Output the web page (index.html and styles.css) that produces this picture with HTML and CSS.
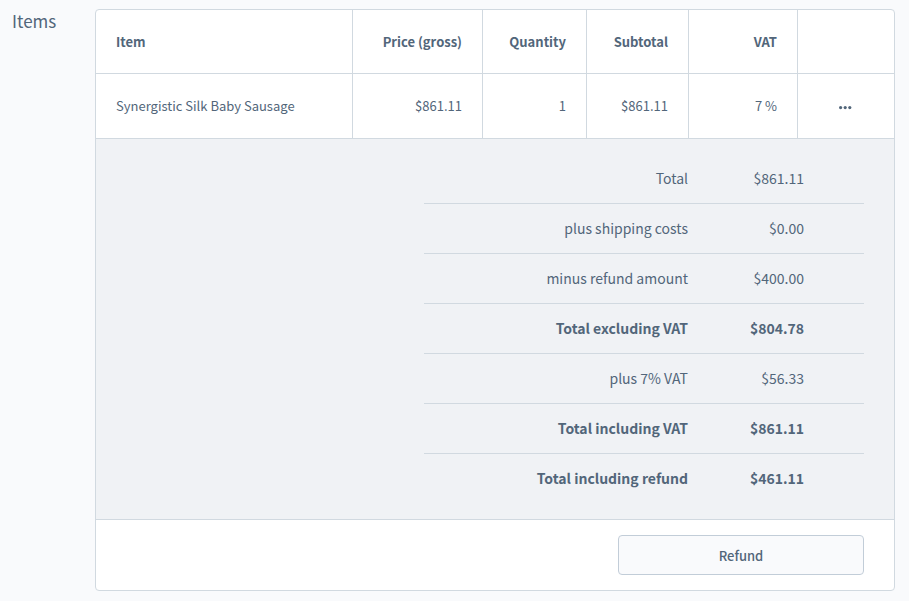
FILE: index.html
```
<!DOCTYPE html>
<html lang="en">
<head>
    <meta charset="UTF-8">
    <meta name="viewport" content="width=device-width, initial-scale=1.0">
    <title>Order - Items</title>
    <link rel="stylesheet" href="styles.css">
</head>
<body>
    <section class="order-section">
        <h2 class="section-title">Items</h2>

        <div class="card">
            <table class="items-table">
                <colgroup>
                    <col>
                    <col class="col-price">
                    <col class="col-quantity">
                    <col class="col-subtotal">
                    <col class="col-vat">
                    <col class="col-actions">
                </colgroup>
                <thead>
                    <tr>
                        <th scope="col">Item</th>
                        <th scope="col" class="number">Price (gross)</th>
                        <th scope="col" class="number">Quantity</th>
                        <th scope="col" class="number">Subtotal</th>
                        <th scope="col" class="number">VAT</th>
                        <td></td>
                    </tr>
                </thead>
                <tbody>
                    <tr>
                        <td>Synergistic Silk Baby Sausage</td>
                        <td class="number">$861.11</td>
                        <td class="number">1</td>
                        <td class="number">$861.11</td>
                        <td class="number">7 %</td>
                        <td class="actions">
                            <button type="button" class="menu-btn" aria-label="Item actions">
                                <svg width="14" height="4" viewBox="0 0 14 4" aria-hidden="true">
                                    <circle cx="1.6" cy="1.6" r="1.6"/>
                                    <circle cx="6.2" cy="1.6" r="1.6"/>
                                    <circle cx="10.8" cy="1.6" r="1.6"/>
                                </svg>
                            </button>
                        </td>
                    </tr>
                </tbody>
            </table>

            <div class="summary">
                <dl class="summary-list">
                    <div class="summary-row">
                        <dt>Total</dt>
                        <dd>$861.11</dd>
                    </div>
                    <div class="summary-row">
                        <dt>plus shipping costs</dt>
                        <dd>$0.00</dd>
                    </div>
                    <div class="summary-row">
                        <dt>minus refund amount</dt>
                        <dd>$400.00</dd>
                    </div>
                    <div class="summary-row strong">
                        <dt>Total excluding VAT</dt>
                        <dd>$804.78</dd>
                    </div>
                    <div class="summary-row">
                        <dt>plus 7% VAT</dt>
                        <dd>$56.33</dd>
                    </div>
                    <div class="summary-row strong">
                        <dt>Total including VAT</dt>
                        <dd>$861.11</dd>
                    </div>
                    <div class="summary-row strong">
                        <dt>Total including refund</dt>
                        <dd>$461.11</dd>
                    </div>
                </dl>
            </div>

            <div class="card-footer">
                <button type="button" class="refund-btn">Refund</button>
            </div>
        </div>
    </section>
</body>
</html>
```
FILE: styles.css
```
* {
    box-sizing: border-box;
}

body {
    margin: 0;
    background-color: #f9fafc;
    color: #52667a;
    font-family: "Source Sans Pro", "Noto Sans CJK SC", sans-serif;
    font-size: 13px;
    line-height: 20px;
}

.order-section {
    display: flex;
    align-items: flex-start;
    padding: 9px 14px 10px 12px;
}

.section-title {
    flex: 0 0 83px;
    margin: 0;
    font-size: 17px;
    font-weight: 400;
    line-height: 24px;
}

.card {
    flex: 1;
    min-width: 0;
    background-color: #fff;
    border: 1px solid #d1d9e0;
    border-radius: 4px;
    overflow: hidden;
}

.items-table {
    width: 100%;
    table-layout: fixed;
    border-collapse: separate;
    border-spacing: 0;
}

.col-price {
    width: 130px;
}

.col-quantity {
    width: 104px;
}

.col-subtotal {
    width: 102px;
}

.col-vat {
    width: 109px;
}

.col-actions {
    width: 96px;
}

.items-table th,
.items-table td {
    height: 64px;
    padding: 0 20px;
    border-right: 1px solid #d1d9e0;
    border-bottom: 1px solid #d1d9e0;
    text-align: left;
}

.items-table tbody td {
    height: 65px;
}

.items-table th:last-child,
.items-table td:last-child {
    border-right: none;
}

.items-table .number {
    text-align: right;
}

.items-table .actions {
    text-align: center;
}

.menu-btn {
    display: inline-flex;
    padding: 8px;
    border: none;
    background: none;
    color: #52667a;
    cursor: pointer;
}

.menu-btn svg {
    fill: currentColor;
}

.summary {
    padding: 15px 30px;
    background-color: #f0f2f5;
    border-bottom: 1px solid #d1d9e0;
}

.summary-list {
    max-width: 440px;
    margin: 0 0 0 auto;
    font-size: 14px;
}

.summary-row {
    display: grid;
    grid-template-columns: 3fr 2fr;
    padding: 14px 0 15px;
    border-bottom: 1px solid #d1d9e0;
    text-align: right;
}

.summary-row:last-child {
    padding-bottom: 16px;
    border-bottom: none;
}

.summary-row dd {
    margin: 0;
    padding-right: 60px;
}

.strong {
    font-weight: 700;
}

.card-footer {
    display: flex;
    justify-content: flex-end;
    padding: 15px 30px;
}

.refund-btn {
    width: calc(100% / 3);
    height: 40px;
    border: 1px solid #c2cdd8;
    border-radius: 4px;
    background-color: #f9fafc;
    color: #52667a;
    font-family: inherit;
    font-size: 13px;
    font-weight: 500;
    cursor: pointer;
}
```
